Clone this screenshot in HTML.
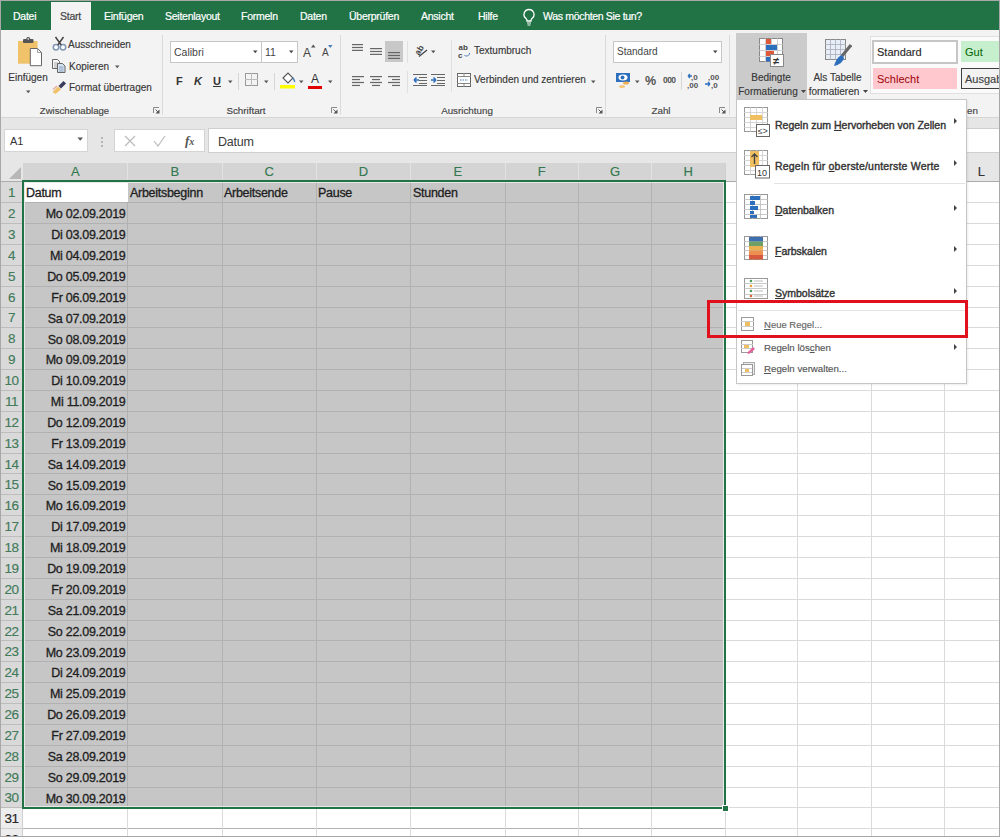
<!DOCTYPE html><html><head><meta charset="utf-8"><style>
html,body{margin:0;padding:0}
body{width:1000px;height:837px;position:relative;overflow:hidden;background:#fff;font-family:"Liberation Sans",sans-serif}
body>div{position:absolute}
.t{white-space:nowrap}
</style></head><body>
<div style="left:0px;top:0px;width:1000px;height:30px;background:#217346"></div>
<div style="left:51px;top:2px;width:40px;height:28px;background:#f3f3f3"></div>
<div class="t" style="left:13px;top:6.0px;line-height:20px;font-size:10.5px;color:#fff;-webkit-text-stroke:0.2px currentColor;letter-spacing:-0.25px;">Datei</div>
<div class="t" style="left:60px;top:6.0px;line-height:20px;font-size:10.5px;color:#444;-webkit-text-stroke:0.2px currentColor;letter-spacing:-0.25px;">Start</div>
<div class="t" style="left:104px;top:6.0px;line-height:20px;font-size:10.5px;color:#fff;-webkit-text-stroke:0.2px currentColor;letter-spacing:-0.25px;">Einfügen</div>
<div class="t" style="left:165px;top:6.0px;line-height:20px;font-size:10.5px;color:#fff;-webkit-text-stroke:0.2px currentColor;letter-spacing:-0.25px;">Seitenlayout</div>
<div class="t" style="left:241px;top:6.0px;line-height:20px;font-size:10.5px;color:#fff;-webkit-text-stroke:0.2px currentColor;letter-spacing:-0.25px;">Formeln</div>
<div class="t" style="left:300px;top:6.0px;line-height:20px;font-size:10.5px;color:#fff;-webkit-text-stroke:0.2px currentColor;letter-spacing:-0.25px;">Daten</div>
<div class="t" style="left:349px;top:6.0px;line-height:20px;font-size:10.5px;color:#fff;-webkit-text-stroke:0.2px currentColor;letter-spacing:-0.25px;">Überprüfen</div>
<div class="t" style="left:421px;top:6.0px;line-height:20px;font-size:10.5px;color:#fff;-webkit-text-stroke:0.2px currentColor;letter-spacing:-0.25px;">Ansicht</div>
<div class="t" style="left:478px;top:6.0px;line-height:20px;font-size:10.5px;color:#fff;-webkit-text-stroke:0.2px currentColor;letter-spacing:-0.25px;">Hilfe</div>
<svg style="position:absolute;left:522px;top:8px" width="14" height="18" viewBox="0 0 14 18"><path d="M7 1.5a5 5 0 0 0-3 9c.8.7 1 1.5 1 2.5h4c0-1 .2-1.8 1-2.5a5 5 0 0 0-3-9z" fill="none" stroke="#fff" stroke-width="1.3"/><path d="M5 15h4M5.5 17h3" stroke="#fff" stroke-width="1.2"/></svg>
<div class="t" style="left:543px;top:6.0px;line-height:20px;font-size:10.6px;color:#fff;-webkit-text-stroke:0.2px currentColor;letter-spacing:-0.37px;">Was möchten Sie tun?</div>
<div style="left:0px;top:30px;width:1000px;height:88px;background:#f3f3f3"></div>
<div style="left:0px;top:117px;width:1000px;height:1px;background:#d6d6d6"></div>
<div style="left:162px;top:35px;width:1px;height:80px;background:#dadada"></div>
<div style="left:340px;top:35px;width:1px;height:80px;background:#dadada"></div>
<div style="left:605px;top:35px;width:1px;height:80px;background:#dadada"></div>
<div style="left:729px;top:35px;width:1px;height:80px;background:#dadada"></div>
<div class="t" style="left:-25.5px;width:200px;text-align:center;top:100.5px;line-height:20px;font-size:9.6px;color:#444;-webkit-text-stroke:0.15px #444;">Zwischenablage</div>
<div class="t" style="left:146.0px;width:200px;text-align:center;top:100.5px;line-height:20px;font-size:9.8px;color:#444;-webkit-text-stroke:0.15px #444;">Schriftart</div>
<div class="t" style="left:367.0px;width:200px;text-align:center;top:100.5px;line-height:20px;font-size:9.8px;color:#444;-webkit-text-stroke:0.15px #444;">Ausrichtung</div>
<div class="t" style="left:561.0px;width:200px;text-align:center;top:100.5px;line-height:20px;font-size:9.8px;color:#444;-webkit-text-stroke:0.15px #444;">Zahl</div>
<div class="t" style="left:967px;top:100.5px;line-height:20px;font-size:9.8px;color:#444;-webkit-text-stroke:0.15px #444;">en</div>
<svg style="position:absolute;left:153px;top:107px" width="7" height="7" viewBox="0 0 7 7"><path d="M0.5 6V0.5H6" stroke="#888" fill="none"/><path d="M6.5 2.5V6.5H2.5z" fill="#555"/><path d="M2.5 2.5l3 3" stroke="#555"/></svg>
<svg style="position:absolute;left:331px;top:107px" width="7" height="7" viewBox="0 0 7 7"><path d="M0.5 6V0.5H6" stroke="#888" fill="none"/><path d="M6.5 2.5V6.5H2.5z" fill="#555"/><path d="M2.5 2.5l3 3" stroke="#555"/></svg>
<svg style="position:absolute;left:596px;top:107px" width="7" height="7" viewBox="0 0 7 7"><path d="M0.5 6V0.5H6" stroke="#888" fill="none"/><path d="M6.5 2.5V6.5H2.5z" fill="#555"/><path d="M2.5 2.5l3 3" stroke="#555"/></svg>
<svg style="position:absolute;left:719px;top:107px" width="7" height="7" viewBox="0 0 7 7"><path d="M0.5 6V0.5H6" stroke="#888" fill="none"/><path d="M6.5 2.5V6.5H2.5z" fill="#555"/><path d="M2.5 2.5l3 3" stroke="#555"/></svg>
<svg style="position:absolute;left:16px;top:36px" width="28" height="32" viewBox="0 0 28 32"><rect x="2" y="5" width="19.5" height="22.7" fill="#f0c26a"/><rect x="7" y="3" width="10.5" height="4" rx="1" fill="#555"/><circle cx="12.2" cy="3" r="2" fill="#555"/><circle cx="12.2" cy="3" r=".8" fill="#fff"/><path d="M14.3 12.5h7.2l4 4v13.2h-11.2z" fill="#fff" stroke="#666" stroke-width="1"/><path d="M21.5 12.5v4h4" fill="none" stroke="#888" stroke-width=".8"/></svg>
<div class="t" style="left:-2.0px;width:60px;text-align:center;top:67.5px;line-height:20px;font-size:10px;color:#333;-webkit-text-stroke:0.15px #444;">Einfügen</div>
<svg style="position:absolute;left:25px;top:90px" width="7" height="4" viewBox="0 0 7 4"><path d="M1 0.5h4.5l-2.25 2.8z" fill="#555"/></svg>
<svg style="position:absolute;left:52px;top:36px" width="15" height="15" viewBox="0 0 15 15"><circle cx="4" cy="11.3" r="2.7" fill="#fff" stroke="#7f96b3" stroke-width="1.5"/><circle cx="11" cy="11.3" r="2.7" fill="#fff" stroke="#7f96b3" stroke-width="1.5"/><path d="M5.8 9L11.5 1M9.2 9L3.5 1" stroke="#444" stroke-width="1.5"/></svg>
<div class="t" style="left:68px;top:34.5px;line-height:20px;font-size:10px;color:#333;-webkit-text-stroke:0.15px #444;">Ausschneiden</div>
<svg style="position:absolute;left:51px;top:58px" width="15" height="15" viewBox="0 0 15 15"><path d="M1.5 1.5h5l2 2v7h-7z" fill="#f6f6f6" stroke="#666"/><path d="M3 5h4M3 7h4M3 9h4" stroke="#999" stroke-width=".8"/><path d="M6.5 5.5h5l2.5 2.5v6.5h-7.5z" fill="#d5e2ef" stroke="#666"/><path d="M8 9h4.5M8 11h4.5M8 13h4.5" stroke="#7f96b3" stroke-width=".8"/></svg>
<div class="t" style="left:69px;top:56.8px;line-height:20px;font-size:10px;color:#333;-webkit-text-stroke:0.15px #444;">Kopieren</div>
<svg style="position:absolute;left:114px;top:65px" width="7" height="4" viewBox="0 0 7 4"><path d="M1 0.5h4.5l-2.25 2.8z" fill="#555"/></svg>
<svg style="position:absolute;left:52px;top:80px" width="15" height="14" viewBox="0 0 15 14"><path d="M0.5 12l5.5-5.5 3 3-5.5 4.5z" fill="#f0c26a"/><path d="M1 9.5l4-3.5" stroke="#e9a8a0" stroke-width="1.2"/><path d="M6.5 6l5-5 2.5 2.5-5 5z" fill="#3b3b5a"/></svg>
<div class="t" style="left:69px;top:78.4px;line-height:20px;font-size:10px;color:#333;-webkit-text-stroke:0.15px #444;">Format übertragen</div>
<div style="left:170px;top:41px;width:92px;height:22px;background:#fff;border:1px solid #c6c6c6;box-sizing:border-box"></div>
<div class="t" style="left:174px;top:41.5px;line-height:20px;font-size:10.5px;color:#444;">Calibri</div>
<svg style="position:absolute;left:252px;top:50px" width="7" height="4" viewBox="0 0 7 4"><path d="M1 0.5h4.5l-2.25 2.8z" fill="#444"/></svg>
<div style="left:261px;top:41px;width:37px;height:22px;background:#fff;border:1px solid #c6c6c6;box-sizing:border-box"></div>
<div class="t" style="left:265px;top:41.5px;line-height:20px;font-size:10.5px;color:#444;">11</div>
<svg style="position:absolute;left:288px;top:50px" width="7" height="4" viewBox="0 0 7 4"><path d="M1 0.5h4.5l-2.25 2.8z" fill="#444"/></svg>
<div class="t" style="left:303px;top:42.5px;line-height:20px;font-size:12px;color:#444;">A</div>
<svg style="position:absolute;left:311px;top:44px" width="5" height="4" viewBox="0 0 5 4"><path d="M0 3.5h4.5l-2.25-3z" fill="#555"/></svg>
<div class="t" style="left:322px;top:43.0px;line-height:20px;font-size:10px;color:#444;">A</div>
<svg style="position:absolute;left:328px;top:45px" width="5" height="4" viewBox="0 0 5 4"><path d="M0 0h4.5l-2.25 3z" fill="#4a7ebb"/></svg>
<div class="t" style="left:176px;top:71.0px;line-height:20px;font-size:11px;color:#333;"><b>F</b></div>
<div class="t" style="left:194px;top:71.0px;line-height:20px;font-size:11px;color:#333;"><b><i>K</i></b></div>
<div class="t" style="left:213px;top:70.5px;line-height:20px;font-size:11px;color:#333;"><b><u>U</u></b></div>
<svg style="position:absolute;left:227px;top:80px" width="7" height="4" viewBox="0 0 7 4"><path d="M1 0.5h4.5l-2.25 2.8z" fill="#555"/></svg>
<div style="left:238px;top:73px;width:1px;height:17px;background:#d6d6d6"></div>
<svg style="position:absolute;left:245px;top:73px" width="13" height="13" viewBox="0 0 13 13"><rect x=".5" y=".5" width="12" height="12" fill="none" stroke="#999"/><path d="M6.5 0v13M0 6.5h13" stroke="#bbb"/></svg>
<svg style="position:absolute;left:263px;top:80px" width="7" height="4" viewBox="0 0 7 4"><path d="M1 0.5h4.5l-2.25 2.8z" fill="#555"/></svg>
<div style="left:274px;top:73px;width:1px;height:17px;background:#d6d6d6"></div>
<svg style="position:absolute;left:280px;top:71px" width="16" height="18" viewBox="0 0 16 18"><path d="M3 7l5-5 5 5-5 5z" fill="#fff" stroke="#555" stroke-width="1.1"/><path d="M13 7c1 2 2 3 1.5 4" stroke="#4a7ebb" stroke-width="1.5" fill="none"/><rect x="0" y="14" width="15" height="3.5" fill="#ffff00"/></svg>
<svg style="position:absolute;left:298px;top:80px" width="7" height="4" viewBox="0 0 7 4"><path d="M1 0.5h4.5l-2.25 2.8z" fill="#555"/></svg>
<div class="t" style="left:311px;top:69.0px;line-height:20px;font-size:12px;color:#333;">A</div>
<div style="left:308px;top:86px;width:14px;height:3px;background:#e00000"></div>
<svg style="position:absolute;left:327px;top:80px" width="7" height="4" viewBox="0 0 7 4"><path d="M1 0.5h4.5l-2.25 2.8z" fill="#555"/></svg>
<svg style="position:absolute;left:352px;top:44px" width="11" height="8.7" viewBox="0 0 11 8.7"><rect x="0" y="0.0" width="11" height="1.2" fill="#666"/><rect x="0" y="2.9" width="11" height="1.2" fill="#666"/><rect x="0" y="5.8" width="11" height="1.2" fill="#666"/></svg>
<svg style="position:absolute;left:370px;top:47.5px" width="12" height="8.7" viewBox="0 0 12 8.7"><rect x="0" y="0.0" width="12" height="1.2" fill="#666"/><rect x="0" y="2.9" width="12" height="1.2" fill="#666"/><rect x="0" y="5.8" width="12" height="1.2" fill="#666"/></svg>
<div style="left:385px;top:41px;width:18px;height:21px;background:#c8c8c8"></div>
<svg style="position:absolute;left:388px;top:52px" width="12" height="8.7" viewBox="0 0 12 8.7"><rect x="0" y="0.0" width="12" height="1.2" fill="#666"/><rect x="0" y="2.9" width="12" height="1.2" fill="#666"/><rect x="0" y="5.8" width="12" height="1.2" fill="#666"/></svg>
<div style="left:407px;top:41px;width:1px;height:22px;background:#e0e0e0"></div>
<div style="left:407px;top:71px;width:1px;height:22px;background:#e0e0e0"></div>
<svg style="position:absolute;left:413px;top:42px" width="16" height="16" viewBox="0 0 16 16"><text x="1" y="11" font-size="8.5" font-weight="bold" font-family="Liberation Sans" fill="#444" transform="rotate(-58 6 8)">ab</text><path d="M6 14.5l8-6.5" stroke="#444" stroke-width="1.3"/></svg>
<svg style="position:absolute;left:430px;top:50px" width="7" height="4" viewBox="0 0 7 4"><path d="M1 0.5h4.5l-2.25 2.8z" fill="#555"/></svg>
<div style="left:451px;top:40px;width:1px;height:52px;background:#e0e0e0"></div>
<svg style="position:absolute;left:458px;top:43px" width="14" height="17" viewBox="0 0 14 17"><text x="0.5" y="7" font-size="8" font-weight="bold" font-family="Liberation Sans" fill="#444">ab</text><text x="0" y="14.5" font-size="8" font-weight="bold" font-family="Liberation Sans" fill="#444">c</text><path d="M6.5 12.5c2 1 5 .5 5-2.5" stroke="#4a7ebb" fill="none" stroke-width="1"/></svg>
<div class="t" style="left:474px;top:41.0px;line-height:20px;font-size:10px;color:#333;-webkit-text-stroke:0.15px #444;">Textumbruch</div>
<svg style="position:absolute;left:352px;top:76px" width="12" height="11.8" viewBox="0 0 12 11.8"><rect x="0" y="0.0" width="12" height="1.2" fill="#666"/><rect x="0" y="2.95" width="8" height="1.2" fill="#666"/><rect x="0" y="5.9" width="12" height="1.2" fill="#666"/><rect x="0" y="8.850000000000001" width="8" height="1.2" fill="#666"/></svg>
<svg style="position:absolute;left:370px;top:76px" width="12" height="12" viewBox="0 0 12 12"><rect x="0.0" y="0.0" width="12" height="1.2" fill="#666"/><rect x="2.0" y="2.95" width="8" height="1.2" fill="#666"/><rect x="0.0" y="5.9" width="12" height="1.2" fill="#666"/><rect x="2.0" y="8.850000000000001" width="8" height="1.2" fill="#666"/></svg>
<svg style="position:absolute;left:388px;top:76px" width="12" height="12" viewBox="0 0 12 12"><rect x="0" y="0.0" width="12" height="1.2" fill="#666"/><rect x="4" y="2.95" width="8" height="1.2" fill="#666"/><rect x="0" y="5.9" width="12" height="1.2" fill="#666"/><rect x="4" y="8.850000000000001" width="8" height="1.2" fill="#666"/></svg>
<svg style="position:absolute;left:413px;top:74px" width="14" height="12" viewBox="0 0 14 12"><path d="M0 .5h14M6 3.5h8M6 6.5h8M6 9.5h8M0 11.5h14" stroke="#666" stroke-width="1"/><path d="M1 6h5M1 6l2.5-2.5M1 6l2.5 2.5" stroke="#2e6fbd" stroke-width="1.5" fill="none"/></svg>
<svg style="position:absolute;left:431px;top:74px" width="14" height="12" viewBox="0 0 14 12"><path d="M0 .5h14M6 3.5h8M6 6.5h8M6 9.5h8M0 11.5h14" stroke="#666" stroke-width="1"/><path d="M0 6h5M5 6l-2.5-2.5M5 6l-2.5 2.5" stroke="#2e6fbd" stroke-width="1.5" fill="none"/></svg>
<svg style="position:absolute;left:457px;top:73px" width="14" height="14" viewBox="0 0 14 14"><rect x=".5" y=".5" width="13" height="13" fill="#fff" stroke="#666"/><path d="M0 3.5h14M0 10.5h14M7 0v3.5M7 10.5v3.5" stroke="#888"/><path d="M3 7h8" stroke="#4a7ebb" stroke-width="1" stroke-dasharray="1.5 1"/></svg>
<div class="t" style="left:474px;top:70.0px;line-height:20px;font-size:10px;color:#333;-webkit-text-stroke:0.15px #444;">Verbinden und zentrieren</div>
<svg style="position:absolute;left:590px;top:80px" width="7" height="4" viewBox="0 0 7 4"><path d="M1 0.5h4.5l-2.25 2.8z" fill="#555"/></svg>
<div style="left:613px;top:41px;width:109px;height:22px;background:#fff;border:1px solid #c6c6c6;box-sizing:border-box"></div>
<div class="t" style="left:617px;top:41.5px;line-height:20px;font-size:10px;color:#444;">Standard</div>
<svg style="position:absolute;left:712px;top:50px" width="7" height="4" viewBox="0 0 7 4"><path d="M1 0.5h4.5l-2.25 2.8z" fill="#444"/></svg>
<svg style="position:absolute;left:615px;top:72px" width="16" height="17" viewBox="0 0 16 17"><rect x="1" y="1" width="14" height="9" fill="#2e6fbd"/><ellipse cx="8" cy="5.5" rx="4.5" ry="3" fill="#fff"/><circle cx="7.5" cy="5.5" r="2" fill="#2e6fbd"/><ellipse cx="11" cy="11" rx="3" ry="1.6" fill="#f0b050"/><ellipse cx="7" cy="14.5" rx="3" ry="1.6" fill="#f5c880"/></svg>
<svg style="position:absolute;left:634px;top:80px" width="7" height="4" viewBox="0 0 7 4"><path d="M1 0.5h4.5l-2.25 2.8z" fill="#555"/></svg>
<div class="t" style="left:645px;top:71.0px;line-height:20px;font-size:12.5px;color:#555;"><b>%</b></div>
<div class="t" style="left:663px;top:69.5px;line-height:20px;font-size:8.5px;color:#555;letter-spacing:-0.6px"><b>000</b></div>
<div style="left:681px;top:72px;width:1px;height:18px;background:#d6d6d6"></div>
<svg style="position:absolute;left:687px;top:72px" width="15" height="18" viewBox="0 0 15 18"><text x="4" y="7.5" font-size="8" font-weight="bold" font-family="Liberation Sans" fill="#555">,0</text><text x="0" y="15.5" font-size="8" font-weight="bold" font-family="Liberation Sans" fill="#555">,00</text><path d="M1 4h4M1 4l2-2M1 4l2 2" stroke="#2e6fbd" stroke-width="1.3" fill="none"/></svg>
<svg style="position:absolute;left:705px;top:72px" width="15" height="18" viewBox="0 0 15 18"><text x="3" y="7.5" font-size="8" font-weight="bold" font-family="Liberation Sans" fill="#555">,00</text><text x="6" y="15.5" font-size="8" font-weight="bold" font-family="Liberation Sans" fill="#555">,0</text><path d="M0 12h5M5 12l-2-2M5 12l-2 2" stroke="#2e6fbd" stroke-width="1.3" fill="none"/></svg>
<div style="left:736px;top:33px;width:71px;height:66px;background:#cbcbcb"></div>
<svg style="position:absolute;left:759px;top:38px" width="26" height="29" viewBox="0 0 26 29"><rect x=".5" y=".5" width="23" height="23" fill="#fff" stroke="#888"/><path d="M6.5 0v24M12.5 0v24M18.5 0v24M0 6.5h24M0 12.5h24M0 18.5h24" stroke="#c4c4c4" stroke-width=".8"/><rect x="7" y="1" width="5" height="5" fill="#e05a3a"/><rect x="7" y="7" width="11" height="5" fill="#2e6fbd"/><rect x="7" y="13" width="8" height="5" fill="#e05a3a"/><rect x="7" y="19" width="5" height="4.5" fill="#2e6fbd"/><rect x="11.5" y="16.5" width="13" height="12" fill="#fff" stroke="#888"/><text x="14" y="26.5" font-size="11" font-weight="bold" font-family="Liberation Sans" fill="#333">≠</text></svg>
<div class="t" style="left:736.0px;width:70px;text-align:center;top:67.6px;line-height:20px;font-size:10px;color:#333;-webkit-text-stroke:0.15px #444;">Bedingte</div>
<div class="t" style="left:728.0px;width:80px;text-align:center;top:82.2px;line-height:20px;font-size:10px;color:#333;-webkit-text-stroke:0.15px #444;">Formatierung</div>
<svg style="position:absolute;left:801px;top:90px" width="5" height="3" viewBox="0 0 5 3"><path d="M0 0h5l-2.5 3z" fill="#444"/></svg>
<svg style="position:absolute;left:825px;top:39px" width="27" height="28" viewBox="0 0 27 28"><rect x=".5" y=".5" width="20" height="20" fill="#e8eef6" stroke="#888"/><path d="M5.5 0v21M10.5 0v21M15.5 0v21M0 5.5h21M0 10.5h21M0 15.5h21" stroke="#aab" stroke-width=".8"/><path d="M26 6l-9 11" stroke="#666" stroke-width="3"/><path d="M17 16c-3 1-6 4-8 11 5-1 9-4 10-8z" fill="#2e6fbd"/></svg>
<div class="t" style="left:802.5px;width:70px;text-align:center;top:67.6px;line-height:20px;font-size:10px;color:#333;-webkit-text-stroke:0.15px #444;">Als Tabelle</div>
<div class="t" style="left:799.0px;width:70px;text-align:center;top:82.2px;line-height:20px;font-size:10px;color:#333;-webkit-text-stroke:0.15px #444;">formatieren</div>
<svg style="position:absolute;left:863px;top:90px" width="5" height="3" viewBox="0 0 5 3"><path d="M0 0h5l-2.5 3z" fill="#444"/></svg>
<div style="left:870px;top:36px;width:130px;height:58px;background:#fafafa;border:1px solid #e0e0e0;box-sizing:border-box"></div>
<div style="left:872px;top:40px;width:86px;height:24px;background:#fff;border:2px solid #c6c6c6;box-sizing:border-box"></div>
<div class="t" style="left:877px;top:41.5px;line-height:20px;font-size:11px;color:#222;-webkit-text-stroke:0.15px #444;">Standard</div>
<div style="left:961px;top:41px;width:39px;height:21px;background:#c6efce"></div>
<div class="t" style="left:965px;top:41.5px;line-height:20px;font-size:11px;color:#006100;">Gut</div>
<div style="left:873px;top:68px;width:84px;height:21px;background:#ffc7ce"></div>
<div class="t" style="left:877px;top:68.5px;line-height:20px;font-size:11px;color:#9c0006;">Schlecht</div>
<div style="left:961px;top:68px;width:39px;height:21px;background:#f2f2f2;border:1px solid #3f3f3f;box-sizing:border-box;border-right:none"></div>
<div class="t" style="left:965px;top:68.5px;line-height:20px;font-size:11px;color:#3f3f3f;-webkit-text-stroke:0.15px #444;">Ausgabe</div>
<div style="left:0px;top:118px;width:1000px;height:45px;background:#e6e6e6"></div>
<div style="left:4px;top:129px;width:84px;height:23px;background:#fff;border:1px solid #d4d4d4;box-sizing:border-box"></div>
<div class="t" style="left:10px;top:131.0px;line-height:20px;font-size:11px;color:#333;">A1</div>
<svg style="position:absolute;left:77px;top:137px" width="7" height="5" viewBox="0 0 7 5"><path d="M.5 .5h5.5l-2.75 3.2z" fill="#555"/></svg>
<div style="left:101px;top:137px;width:2px;height:2px;background:#b5b5b5"></div>
<div style="left:101px;top:141px;width:2px;height:2px;background:#b5b5b5"></div>
<div style="left:101px;top:145px;width:2px;height:2px;background:#b5b5b5"></div>
<div style="left:114px;top:129px;width:91px;height:23px;background:#fff;border:1px solid #d4d4d4;box-sizing:border-box"></div>
<svg style="position:absolute;left:124px;top:135px" width="12" height="12" viewBox="0 0 12 12"><path d="M1 1l10 10M11 1L1 11" stroke="#bbb" stroke-width="1.2"/></svg>
<svg style="position:absolute;left:153px;top:135px" width="13" height="12" viewBox="0 0 13 12"><path d="M1 6l4 5 7-10" stroke="#bbb" stroke-width="1.2" fill="none"/></svg>
<div class="t" style="left:185px;top:131.0px;line-height:20px;font-size:13px;color:#555;font-family:'Liberation Serif',serif"><b><i>f</i><i style="font-size:10px">x</i></b></div>
<div style="left:208px;top:128px;width:792px;height:25px;background:#fff;border:1px solid #cfcfcf;box-sizing:border-box"></div>
<div class="t" style="left:218px;top:131.5px;line-height:20px;font-size:12.5px;color:#3a3a3a;letter-spacing:-0.2px;">Datum</div>
<div style="left:0px;top:163px;width:1000px;height:18px;background:#e6e6e6"></div>
<div style="left:23px;top:163px;width:702px;height:18px;background:#d4d4d4"></div>
<div style="left:0px;top:181px;width:1000px;height:1px;background:#ababab"></div>
<div style="left:127.0px;top:163px;width:1px;height:18px;background:#e2e2e2"></div>
<div class="t" style="left:-24.75px;width:200px;text-align:center;top:162.0px;line-height:20px;font-size:13px;color:#35784f;-webkit-text-stroke:0.15px currentColor;">A</div>
<div style="left:221.5px;top:163px;width:1px;height:18px;background:#e2e2e2"></div>
<div class="t" style="left:74.75px;width:200px;text-align:center;top:162.0px;line-height:20px;font-size:13px;color:#35784f;-webkit-text-stroke:0.15px currentColor;">B</div>
<div style="left:316.0px;top:163px;width:1px;height:18px;background:#e2e2e2"></div>
<div class="t" style="left:169.25px;width:200px;text-align:center;top:162.0px;line-height:20px;font-size:13px;color:#35784f;-webkit-text-stroke:0.15px currentColor;">C</div>
<div style="left:410.0px;top:163px;width:1px;height:18px;background:#e2e2e2"></div>
<div class="t" style="left:263.5px;width:200px;text-align:center;top:162.0px;line-height:20px;font-size:13px;color:#35784f;-webkit-text-stroke:0.15px currentColor;">D</div>
<div style="left:504.5px;top:163px;width:1px;height:18px;background:#e2e2e2"></div>
<div class="t" style="left:357.75px;width:200px;text-align:center;top:162.0px;line-height:20px;font-size:13px;color:#35784f;-webkit-text-stroke:0.15px currentColor;">E</div>
<div style="left:578.0px;top:163px;width:1px;height:18px;background:#e2e2e2"></div>
<div class="t" style="left:441.75px;width:200px;text-align:center;top:162.0px;line-height:20px;font-size:13px;color:#35784f;-webkit-text-stroke:0.15px currentColor;">F</div>
<div style="left:651.0px;top:163px;width:1px;height:18px;background:#e2e2e2"></div>
<div class="t" style="left:515.0px;width:200px;text-align:center;top:162.0px;line-height:20px;font-size:13px;color:#35784f;-webkit-text-stroke:0.15px currentColor;">G</div>
<div style="left:724.5px;top:163px;width:1px;height:18px;background:#cfcfcf"></div>
<div class="t" style="left:588.25px;width:200px;text-align:center;top:162.0px;line-height:20px;font-size:13px;color:#35784f;-webkit-text-stroke:0.15px currentColor;">H</div>
<div style="left:797.0px;top:163px;width:1px;height:18px;background:#cfcfcf"></div>
<div style="left:870.5px;top:163px;width:1px;height:18px;background:#cfcfcf"></div>
<div style="left:944.0px;top:163px;width:1px;height:18px;background:#cfcfcf"></div>
<div style="left:1017.5px;top:163px;width:1px;height:18px;background:#cfcfcf"></div>
<div class="t" style="left:881.25px;width:200px;text-align:center;top:162.0px;line-height:20px;font-size:13px;color:#333;-webkit-text-stroke:0.15px currentColor;">L</div>
<svg style="position:absolute;left:8px;top:166px" width="14" height="14" viewBox="0 0 14 14"><path d="M13 1v12H1z" fill="#b7b7b7"/></svg>
<div style="left:0px;top:182px;width:23px;height:700px;background:#ededed"></div>
<div style="left:0px;top:182px;width:23px;height:625.6px;background:#d9d9d9"></div>
<div style="left:22px;top:808px;width:1px;height:40px;background:#cfcfcf"></div>
<div style="left:23px;top:182px;width:977px;height:700px;background:#fff"></div>
<div style="left:23px;top:181.5px;width:702px;height:626.1px;background:#c6c6c6"></div>
<div style="left:23px;top:202.17000000000002px;width:702px;height:1px;background:#b1b1b1"></div>
<div style="left:725px;top:202.17000000000002px;width:275px;height:1px;background:#dadada"></div>
<div style="left:0px;top:202.17000000000002px;width:23px;height:1px;background:#bdbdbd"></div>
<div style="left:23px;top:223.04000000000002px;width:702px;height:1px;background:#b1b1b1"></div>
<div style="left:725px;top:223.04000000000002px;width:275px;height:1px;background:#dadada"></div>
<div style="left:0px;top:223.04000000000002px;width:23px;height:1px;background:#bdbdbd"></div>
<div style="left:23px;top:243.91000000000003px;width:702px;height:1px;background:#b1b1b1"></div>
<div style="left:725px;top:243.91000000000003px;width:275px;height:1px;background:#dadada"></div>
<div style="left:0px;top:243.91000000000003px;width:23px;height:1px;background:#bdbdbd"></div>
<div style="left:23px;top:264.78000000000003px;width:702px;height:1px;background:#b1b1b1"></div>
<div style="left:725px;top:264.78000000000003px;width:275px;height:1px;background:#dadada"></div>
<div style="left:0px;top:264.78000000000003px;width:23px;height:1px;background:#bdbdbd"></div>
<div style="left:23px;top:285.65000000000003px;width:702px;height:1px;background:#b1b1b1"></div>
<div style="left:725px;top:285.65000000000003px;width:275px;height:1px;background:#dadada"></div>
<div style="left:0px;top:285.65000000000003px;width:23px;height:1px;background:#bdbdbd"></div>
<div style="left:23px;top:306.52000000000004px;width:702px;height:1px;background:#b1b1b1"></div>
<div style="left:725px;top:306.52000000000004px;width:275px;height:1px;background:#dadada"></div>
<div style="left:0px;top:306.52000000000004px;width:23px;height:1px;background:#bdbdbd"></div>
<div style="left:23px;top:327.39000000000004px;width:702px;height:1px;background:#b1b1b1"></div>
<div style="left:725px;top:327.39000000000004px;width:275px;height:1px;background:#dadada"></div>
<div style="left:0px;top:327.39000000000004px;width:23px;height:1px;background:#bdbdbd"></div>
<div style="left:23px;top:348.26000000000005px;width:702px;height:1px;background:#b1b1b1"></div>
<div style="left:725px;top:348.26000000000005px;width:275px;height:1px;background:#dadada"></div>
<div style="left:0px;top:348.26000000000005px;width:23px;height:1px;background:#bdbdbd"></div>
<div style="left:23px;top:369.13000000000005px;width:702px;height:1px;background:#b1b1b1"></div>
<div style="left:725px;top:369.13000000000005px;width:275px;height:1px;background:#dadada"></div>
<div style="left:0px;top:369.13000000000005px;width:23px;height:1px;background:#bdbdbd"></div>
<div style="left:23px;top:390.00000000000006px;width:702px;height:1px;background:#b1b1b1"></div>
<div style="left:725px;top:390.00000000000006px;width:275px;height:1px;background:#dadada"></div>
<div style="left:0px;top:390.00000000000006px;width:23px;height:1px;background:#bdbdbd"></div>
<div style="left:23px;top:410.87000000000006px;width:702px;height:1px;background:#b1b1b1"></div>
<div style="left:725px;top:410.87000000000006px;width:275px;height:1px;background:#dadada"></div>
<div style="left:0px;top:410.87000000000006px;width:23px;height:1px;background:#bdbdbd"></div>
<div style="left:23px;top:431.74px;width:702px;height:1px;background:#b1b1b1"></div>
<div style="left:725px;top:431.74px;width:275px;height:1px;background:#dadada"></div>
<div style="left:0px;top:431.74px;width:23px;height:1px;background:#bdbdbd"></div>
<div style="left:23px;top:452.61px;width:702px;height:1px;background:#b1b1b1"></div>
<div style="left:725px;top:452.61px;width:275px;height:1px;background:#dadada"></div>
<div style="left:0px;top:452.61px;width:23px;height:1px;background:#bdbdbd"></div>
<div style="left:23px;top:473.48px;width:702px;height:1px;background:#b1b1b1"></div>
<div style="left:725px;top:473.48px;width:275px;height:1px;background:#dadada"></div>
<div style="left:0px;top:473.48px;width:23px;height:1px;background:#bdbdbd"></div>
<div style="left:23px;top:494.35px;width:702px;height:1px;background:#b1b1b1"></div>
<div style="left:725px;top:494.35px;width:275px;height:1px;background:#dadada"></div>
<div style="left:0px;top:494.35px;width:23px;height:1px;background:#bdbdbd"></div>
<div style="left:23px;top:515.22px;width:702px;height:1px;background:#b1b1b1"></div>
<div style="left:725px;top:515.22px;width:275px;height:1px;background:#dadada"></div>
<div style="left:0px;top:515.22px;width:23px;height:1px;background:#bdbdbd"></div>
<div style="left:23px;top:536.0899999999999px;width:702px;height:1px;background:#b1b1b1"></div>
<div style="left:725px;top:536.0899999999999px;width:275px;height:1px;background:#dadada"></div>
<div style="left:0px;top:536.0899999999999px;width:23px;height:1px;background:#bdbdbd"></div>
<div style="left:23px;top:556.96px;width:702px;height:1px;background:#b1b1b1"></div>
<div style="left:725px;top:556.96px;width:275px;height:1px;background:#dadada"></div>
<div style="left:0px;top:556.96px;width:23px;height:1px;background:#bdbdbd"></div>
<div style="left:23px;top:577.8299999999999px;width:702px;height:1px;background:#b1b1b1"></div>
<div style="left:725px;top:577.8299999999999px;width:275px;height:1px;background:#dadada"></div>
<div style="left:0px;top:577.8299999999999px;width:23px;height:1px;background:#bdbdbd"></div>
<div style="left:23px;top:598.7px;width:702px;height:1px;background:#b1b1b1"></div>
<div style="left:725px;top:598.7px;width:275px;height:1px;background:#dadada"></div>
<div style="left:0px;top:598.7px;width:23px;height:1px;background:#bdbdbd"></div>
<div style="left:23px;top:619.5699999999999px;width:702px;height:1px;background:#b1b1b1"></div>
<div style="left:725px;top:619.5699999999999px;width:275px;height:1px;background:#dadada"></div>
<div style="left:0px;top:619.5699999999999px;width:23px;height:1px;background:#bdbdbd"></div>
<div style="left:23px;top:640.44px;width:702px;height:1px;background:#b1b1b1"></div>
<div style="left:725px;top:640.44px;width:275px;height:1px;background:#dadada"></div>
<div style="left:0px;top:640.44px;width:23px;height:1px;background:#bdbdbd"></div>
<div style="left:23px;top:661.31px;width:702px;height:1px;background:#b1b1b1"></div>
<div style="left:725px;top:661.31px;width:275px;height:1px;background:#dadada"></div>
<div style="left:0px;top:661.31px;width:23px;height:1px;background:#bdbdbd"></div>
<div style="left:23px;top:682.18px;width:702px;height:1px;background:#b1b1b1"></div>
<div style="left:725px;top:682.18px;width:275px;height:1px;background:#dadada"></div>
<div style="left:0px;top:682.18px;width:23px;height:1px;background:#bdbdbd"></div>
<div style="left:23px;top:703.05px;width:702px;height:1px;background:#b1b1b1"></div>
<div style="left:725px;top:703.05px;width:275px;height:1px;background:#dadada"></div>
<div style="left:0px;top:703.05px;width:23px;height:1px;background:#bdbdbd"></div>
<div style="left:23px;top:723.92px;width:702px;height:1px;background:#b1b1b1"></div>
<div style="left:725px;top:723.92px;width:275px;height:1px;background:#dadada"></div>
<div style="left:0px;top:723.92px;width:23px;height:1px;background:#bdbdbd"></div>
<div style="left:23px;top:744.79px;width:702px;height:1px;background:#b1b1b1"></div>
<div style="left:725px;top:744.79px;width:275px;height:1px;background:#dadada"></div>
<div style="left:0px;top:744.79px;width:23px;height:1px;background:#bdbdbd"></div>
<div style="left:23px;top:765.66px;width:702px;height:1px;background:#b1b1b1"></div>
<div style="left:725px;top:765.66px;width:275px;height:1px;background:#dadada"></div>
<div style="left:0px;top:765.66px;width:23px;height:1px;background:#bdbdbd"></div>
<div style="left:23px;top:786.53px;width:702px;height:1px;background:#b1b1b1"></div>
<div style="left:725px;top:786.53px;width:275px;height:1px;background:#dadada"></div>
<div style="left:0px;top:786.53px;width:23px;height:1px;background:#bdbdbd"></div>
<div style="left:23px;top:807.4px;width:702px;height:1px;background:#b1b1b1"></div>
<div style="left:725px;top:807.4px;width:275px;height:1px;background:#dadada"></div>
<div style="left:0px;top:807.4px;width:23px;height:1px;background:#bdbdbd"></div>
<div style="left:23px;top:828.27px;width:702px;height:1px;background:#b1b1b1"></div>
<div style="left:725px;top:828.27px;width:275px;height:1px;background:#dadada"></div>
<div style="left:0px;top:828.27px;width:23px;height:1px;background:#cfcfcf"></div>
<div style="left:23px;top:849.14px;width:702px;height:1px;background:#b1b1b1"></div>
<div style="left:725px;top:849.14px;width:275px;height:1px;background:#dadada"></div>
<div style="left:0px;top:849.14px;width:23px;height:1px;background:#cfcfcf"></div>
<div style="left:127.0px;top:182px;width:1px;height:625.6px;background:#b1b1b1"></div>
<div style="left:127.0px;top:807.6px;width:1px;height:100px;background:#dadada"></div>
<div style="left:221.5px;top:182px;width:1px;height:625.6px;background:#b1b1b1"></div>
<div style="left:221.5px;top:807.6px;width:1px;height:100px;background:#dadada"></div>
<div style="left:316.0px;top:182px;width:1px;height:625.6px;background:#b1b1b1"></div>
<div style="left:316.0px;top:807.6px;width:1px;height:100px;background:#dadada"></div>
<div style="left:410.0px;top:182px;width:1px;height:625.6px;background:#b1b1b1"></div>
<div style="left:410.0px;top:807.6px;width:1px;height:100px;background:#dadada"></div>
<div style="left:504.5px;top:182px;width:1px;height:625.6px;background:#b1b1b1"></div>
<div style="left:504.5px;top:807.6px;width:1px;height:100px;background:#dadada"></div>
<div style="left:578.0px;top:182px;width:1px;height:625.6px;background:#b1b1b1"></div>
<div style="left:578.0px;top:807.6px;width:1px;height:100px;background:#dadada"></div>
<div style="left:651.0px;top:182px;width:1px;height:625.6px;background:#b1b1b1"></div>
<div style="left:651.0px;top:807.6px;width:1px;height:100px;background:#dadada"></div>
<div style="left:724.5px;top:182px;width:1px;height:700px;background:#dadada"></div>
<div style="left:797.0px;top:182px;width:1px;height:700px;background:#dadada"></div>
<div style="left:870.5px;top:182px;width:1px;height:700px;background:#dadada"></div>
<div style="left:944.0px;top:182px;width:1px;height:700px;background:#dadada"></div>
<div style="left:23px;top:182px;width:104.5px;height:20.3px;background:#fff"></div>
<div class="t" style="left:0.0px;width:23px;text-align:center;top:183.235px;line-height:20px;font-size:13.5px;color:#427a5a;-webkit-text-stroke:0.15px currentColor;letter-spacing:-0.6px;">1</div>
<div class="t" style="left:0.0px;width:23px;text-align:center;top:204.10500000000002px;line-height:20px;font-size:13.5px;color:#427a5a;-webkit-text-stroke:0.15px currentColor;letter-spacing:-0.6px;">2</div>
<div class="t" style="left:0.0px;width:23px;text-align:center;top:224.97500000000002px;line-height:20px;font-size:13.5px;color:#427a5a;-webkit-text-stroke:0.15px currentColor;letter-spacing:-0.6px;">3</div>
<div class="t" style="left:0.0px;width:23px;text-align:center;top:245.84500000000003px;line-height:20px;font-size:13.5px;color:#427a5a;-webkit-text-stroke:0.15px currentColor;letter-spacing:-0.6px;">4</div>
<div class="t" style="left:0.0px;width:23px;text-align:center;top:266.71500000000003px;line-height:20px;font-size:13.5px;color:#427a5a;-webkit-text-stroke:0.15px currentColor;letter-spacing:-0.6px;">5</div>
<div class="t" style="left:0.0px;width:23px;text-align:center;top:287.58500000000004px;line-height:20px;font-size:13.5px;color:#427a5a;-webkit-text-stroke:0.15px currentColor;letter-spacing:-0.6px;">6</div>
<div class="t" style="left:0.0px;width:23px;text-align:center;top:308.455px;line-height:20px;font-size:13.5px;color:#427a5a;-webkit-text-stroke:0.15px currentColor;letter-spacing:-0.6px;">7</div>
<div class="t" style="left:0.0px;width:23px;text-align:center;top:329.325px;line-height:20px;font-size:13.5px;color:#427a5a;-webkit-text-stroke:0.15px currentColor;letter-spacing:-0.6px;">8</div>
<div class="t" style="left:0.0px;width:23px;text-align:center;top:350.195px;line-height:20px;font-size:13.5px;color:#427a5a;-webkit-text-stroke:0.15px currentColor;letter-spacing:-0.6px;">9</div>
<div class="t" style="left:0.0px;width:23px;text-align:center;top:371.065px;line-height:20px;font-size:13.5px;color:#427a5a;-webkit-text-stroke:0.15px currentColor;letter-spacing:-0.6px;">10</div>
<div class="t" style="left:0.0px;width:23px;text-align:center;top:391.935px;line-height:20px;font-size:13.5px;color:#427a5a;-webkit-text-stroke:0.15px currentColor;letter-spacing:-0.6px;">11</div>
<div class="t" style="left:0.0px;width:23px;text-align:center;top:412.805px;line-height:20px;font-size:13.5px;color:#427a5a;-webkit-text-stroke:0.15px currentColor;letter-spacing:-0.6px;">12</div>
<div class="t" style="left:0.0px;width:23px;text-align:center;top:433.675px;line-height:20px;font-size:13.5px;color:#427a5a;-webkit-text-stroke:0.15px currentColor;letter-spacing:-0.6px;">13</div>
<div class="t" style="left:0.0px;width:23px;text-align:center;top:454.545px;line-height:20px;font-size:13.5px;color:#427a5a;-webkit-text-stroke:0.15px currentColor;letter-spacing:-0.6px;">14</div>
<div class="t" style="left:0.0px;width:23px;text-align:center;top:475.415px;line-height:20px;font-size:13.5px;color:#427a5a;-webkit-text-stroke:0.15px currentColor;letter-spacing:-0.6px;">15</div>
<div class="t" style="left:0.0px;width:23px;text-align:center;top:496.285px;line-height:20px;font-size:13.5px;color:#427a5a;-webkit-text-stroke:0.15px currentColor;letter-spacing:-0.6px;">16</div>
<div class="t" style="left:0.0px;width:23px;text-align:center;top:517.155px;line-height:20px;font-size:13.5px;color:#427a5a;-webkit-text-stroke:0.15px currentColor;letter-spacing:-0.6px;">17</div>
<div class="t" style="left:0.0px;width:23px;text-align:center;top:538.025px;line-height:20px;font-size:13.5px;color:#427a5a;-webkit-text-stroke:0.15px currentColor;letter-spacing:-0.6px;">18</div>
<div class="t" style="left:0.0px;width:23px;text-align:center;top:558.895px;line-height:20px;font-size:13.5px;color:#427a5a;-webkit-text-stroke:0.15px currentColor;letter-spacing:-0.6px;">19</div>
<div class="t" style="left:0.0px;width:23px;text-align:center;top:579.765px;line-height:20px;font-size:13.5px;color:#427a5a;-webkit-text-stroke:0.15px currentColor;letter-spacing:-0.6px;">20</div>
<div class="t" style="left:0.0px;width:23px;text-align:center;top:600.635px;line-height:20px;font-size:13.5px;color:#427a5a;-webkit-text-stroke:0.15px currentColor;letter-spacing:-0.6px;">21</div>
<div class="t" style="left:0.0px;width:23px;text-align:center;top:621.505px;line-height:20px;font-size:13.5px;color:#427a5a;-webkit-text-stroke:0.15px currentColor;letter-spacing:-0.6px;">22</div>
<div class="t" style="left:0.0px;width:23px;text-align:center;top:642.375px;line-height:20px;font-size:13.5px;color:#427a5a;-webkit-text-stroke:0.15px currentColor;letter-spacing:-0.6px;">23</div>
<div class="t" style="left:0.0px;width:23px;text-align:center;top:663.245px;line-height:20px;font-size:13.5px;color:#427a5a;-webkit-text-stroke:0.15px currentColor;letter-spacing:-0.6px;">24</div>
<div class="t" style="left:0.0px;width:23px;text-align:center;top:684.115px;line-height:20px;font-size:13.5px;color:#427a5a;-webkit-text-stroke:0.15px currentColor;letter-spacing:-0.6px;">25</div>
<div class="t" style="left:0.0px;width:23px;text-align:center;top:704.985px;line-height:20px;font-size:13.5px;color:#427a5a;-webkit-text-stroke:0.15px currentColor;letter-spacing:-0.6px;">26</div>
<div class="t" style="left:0.0px;width:23px;text-align:center;top:725.855px;line-height:20px;font-size:13.5px;color:#427a5a;-webkit-text-stroke:0.15px currentColor;letter-spacing:-0.6px;">27</div>
<div class="t" style="left:0.0px;width:23px;text-align:center;top:746.725px;line-height:20px;font-size:13.5px;color:#427a5a;-webkit-text-stroke:0.15px currentColor;letter-spacing:-0.6px;">28</div>
<div class="t" style="left:0.0px;width:23px;text-align:center;top:767.595px;line-height:20px;font-size:13.5px;color:#427a5a;-webkit-text-stroke:0.15px currentColor;letter-spacing:-0.6px;">29</div>
<div class="t" style="left:0.0px;width:23px;text-align:center;top:788.465px;line-height:20px;font-size:13.5px;color:#427a5a;-webkit-text-stroke:0.15px currentColor;letter-spacing:-0.6px;">30</div>
<div class="t" style="left:0.0px;width:23px;text-align:center;top:809.335px;line-height:20px;font-size:13.5px;color:#262626;-webkit-text-stroke:0.15px currentColor;letter-spacing:-0.6px;">31</div>
<div class="t" style="left:0.0px;width:23px;text-align:center;top:830.205px;line-height:20px;font-size:13.5px;color:#262626;-webkit-text-stroke:0.15px currentColor;letter-spacing:-0.6px;">32</div>
<div class="t" style="left:-74.5px;width:200px;text-align:right;top:204.305px;line-height:20px;font-size:12.5px;color:#1e1e1e;letter-spacing:-0.28px;-webkit-text-stroke:0.3px #1e1e1e;">Mo 02.09.2019</div>
<div class="t" style="left:-74.5px;width:200px;text-align:right;top:225.175px;line-height:20px;font-size:12.5px;color:#1e1e1e;letter-spacing:-0.28px;-webkit-text-stroke:0.3px #1e1e1e;">Di 03.09.2019</div>
<div class="t" style="left:-74.5px;width:200px;text-align:right;top:246.04500000000002px;line-height:20px;font-size:12.5px;color:#1e1e1e;letter-spacing:-0.28px;-webkit-text-stroke:0.3px #1e1e1e;">Mi 04.09.2019</div>
<div class="t" style="left:-74.5px;width:200px;text-align:right;top:266.915px;line-height:20px;font-size:12.5px;color:#1e1e1e;letter-spacing:-0.28px;-webkit-text-stroke:0.3px #1e1e1e;">Do 05.09.2019</div>
<div class="t" style="left:-74.5px;width:200px;text-align:right;top:287.785px;line-height:20px;font-size:12.5px;color:#1e1e1e;letter-spacing:-0.28px;-webkit-text-stroke:0.3px #1e1e1e;">Fr 06.09.2019</div>
<div class="t" style="left:-74.5px;width:200px;text-align:right;top:308.655px;line-height:20px;font-size:12.5px;color:#1e1e1e;letter-spacing:-0.28px;-webkit-text-stroke:0.3px #1e1e1e;">Sa 07.09.2019</div>
<div class="t" style="left:-74.5px;width:200px;text-align:right;top:329.525px;line-height:20px;font-size:12.5px;color:#1e1e1e;letter-spacing:-0.28px;-webkit-text-stroke:0.3px #1e1e1e;">So 08.09.2019</div>
<div class="t" style="left:-74.5px;width:200px;text-align:right;top:350.395px;line-height:20px;font-size:12.5px;color:#1e1e1e;letter-spacing:-0.28px;-webkit-text-stroke:0.3px #1e1e1e;">Mo 09.09.2019</div>
<div class="t" style="left:-74.5px;width:200px;text-align:right;top:371.265px;line-height:20px;font-size:12.5px;color:#1e1e1e;letter-spacing:-0.28px;-webkit-text-stroke:0.3px #1e1e1e;">Di 10.09.2019</div>
<div class="t" style="left:-74.5px;width:200px;text-align:right;top:392.135px;line-height:20px;font-size:12.5px;color:#1e1e1e;letter-spacing:-0.28px;-webkit-text-stroke:0.3px #1e1e1e;">Mi 11.09.2019</div>
<div class="t" style="left:-74.5px;width:200px;text-align:right;top:413.005px;line-height:20px;font-size:12.5px;color:#1e1e1e;letter-spacing:-0.28px;-webkit-text-stroke:0.3px #1e1e1e;">Do 12.09.2019</div>
<div class="t" style="left:-74.5px;width:200px;text-align:right;top:433.875px;line-height:20px;font-size:12.5px;color:#1e1e1e;letter-spacing:-0.28px;-webkit-text-stroke:0.3px #1e1e1e;">Fr 13.09.2019</div>
<div class="t" style="left:-74.5px;width:200px;text-align:right;top:454.745px;line-height:20px;font-size:12.5px;color:#1e1e1e;letter-spacing:-0.28px;-webkit-text-stroke:0.3px #1e1e1e;">Sa 14.09.2019</div>
<div class="t" style="left:-74.5px;width:200px;text-align:right;top:475.615px;line-height:20px;font-size:12.5px;color:#1e1e1e;letter-spacing:-0.28px;-webkit-text-stroke:0.3px #1e1e1e;">So 15.09.2019</div>
<div class="t" style="left:-74.5px;width:200px;text-align:right;top:496.485px;line-height:20px;font-size:12.5px;color:#1e1e1e;letter-spacing:-0.28px;-webkit-text-stroke:0.3px #1e1e1e;">Mo 16.09.2019</div>
<div class="t" style="left:-74.5px;width:200px;text-align:right;top:517.355px;line-height:20px;font-size:12.5px;color:#1e1e1e;letter-spacing:-0.28px;-webkit-text-stroke:0.3px #1e1e1e;">Di 17.09.2019</div>
<div class="t" style="left:-74.5px;width:200px;text-align:right;top:538.225px;line-height:20px;font-size:12.5px;color:#1e1e1e;letter-spacing:-0.28px;-webkit-text-stroke:0.3px #1e1e1e;">Mi 18.09.2019</div>
<div class="t" style="left:-74.5px;width:200px;text-align:right;top:559.095px;line-height:20px;font-size:12.5px;color:#1e1e1e;letter-spacing:-0.28px;-webkit-text-stroke:0.3px #1e1e1e;">Do 19.09.2019</div>
<div class="t" style="left:-74.5px;width:200px;text-align:right;top:579.965px;line-height:20px;font-size:12.5px;color:#1e1e1e;letter-spacing:-0.28px;-webkit-text-stroke:0.3px #1e1e1e;">Fr 20.09.2019</div>
<div class="t" style="left:-74.5px;width:200px;text-align:right;top:600.835px;line-height:20px;font-size:12.5px;color:#1e1e1e;letter-spacing:-0.28px;-webkit-text-stroke:0.3px #1e1e1e;">Sa 21.09.2019</div>
<div class="t" style="left:-74.5px;width:200px;text-align:right;top:621.705px;line-height:20px;font-size:12.5px;color:#1e1e1e;letter-spacing:-0.28px;-webkit-text-stroke:0.3px #1e1e1e;">So 22.09.2019</div>
<div class="t" style="left:-74.5px;width:200px;text-align:right;top:642.575px;line-height:20px;font-size:12.5px;color:#1e1e1e;letter-spacing:-0.28px;-webkit-text-stroke:0.3px #1e1e1e;">Mo 23.09.2019</div>
<div class="t" style="left:-74.5px;width:200px;text-align:right;top:663.445px;line-height:20px;font-size:12.5px;color:#1e1e1e;letter-spacing:-0.28px;-webkit-text-stroke:0.3px #1e1e1e;">Di 24.09.2019</div>
<div class="t" style="left:-74.5px;width:200px;text-align:right;top:684.315px;line-height:20px;font-size:12.5px;color:#1e1e1e;letter-spacing:-0.28px;-webkit-text-stroke:0.3px #1e1e1e;">Mi 25.09.2019</div>
<div class="t" style="left:-74.5px;width:200px;text-align:right;top:705.1850000000001px;line-height:20px;font-size:12.5px;color:#1e1e1e;letter-spacing:-0.28px;-webkit-text-stroke:0.3px #1e1e1e;">Do 26.09.2019</div>
<div class="t" style="left:-74.5px;width:200px;text-align:right;top:726.0550000000001px;line-height:20px;font-size:12.5px;color:#1e1e1e;letter-spacing:-0.28px;-webkit-text-stroke:0.3px #1e1e1e;">Fr 27.09.2019</div>
<div class="t" style="left:-74.5px;width:200px;text-align:right;top:746.9250000000001px;line-height:20px;font-size:12.5px;color:#1e1e1e;letter-spacing:-0.28px;-webkit-text-stroke:0.3px #1e1e1e;">Sa 28.09.2019</div>
<div class="t" style="left:-74.5px;width:200px;text-align:right;top:767.7950000000001px;line-height:20px;font-size:12.5px;color:#1e1e1e;letter-spacing:-0.28px;-webkit-text-stroke:0.3px #1e1e1e;">So 29.09.2019</div>
<div class="t" style="left:-74.5px;width:200px;text-align:right;top:788.6650000000001px;line-height:20px;font-size:12.5px;color:#1e1e1e;letter-spacing:-0.28px;-webkit-text-stroke:0.3px #1e1e1e;">Mo 30.09.2019</div>
<div class="t" style="left:26px;top:183.435px;line-height:20px;font-size:12.5px;color:#1e1e1e;letter-spacing:-0.28px;-webkit-text-stroke:0.3px #1e1e1e;">Datum</div>
<div class="t" style="left:130px;top:183.435px;line-height:20px;font-size:12.5px;color:#1e1e1e;letter-spacing:-0.28px;-webkit-text-stroke:0.3px #1e1e1e;">Arbeitsbeginn</div>
<div class="t" style="left:224px;top:183.435px;line-height:20px;font-size:12.5px;color:#1e1e1e;letter-spacing:-0.28px;-webkit-text-stroke:0.3px #1e1e1e;">Arbeitsende</div>
<div class="t" style="left:318px;top:183.435px;line-height:20px;font-size:12.5px;color:#1e1e1e;letter-spacing:-0.28px;-webkit-text-stroke:0.3px #1e1e1e;">Pause</div>
<div class="t" style="left:413px;top:183.435px;line-height:20px;font-size:12.5px;color:#1e1e1e;letter-spacing:-0.28px;-webkit-text-stroke:0.3px #1e1e1e;">Stunden</div>
<div style="left:24px;top:182px;width:700px;height:1px;background:#e8e8e8"></div>
<div style="left:24px;top:806px;width:700px;height:1px;background:#e8e8e8"></div>
<div style="left:24px;top:182px;width:1px;height:625px;background:#e8e8e8"></div>
<div style="left:723px;top:182px;width:1px;height:625px;background:#e8e8e8"></div>
<div style="left:22px;top:180px;width:704px;height:2px;background:#217346"></div>
<div style="left:22px;top:807px;width:704px;height:2px;background:#217346"></div>
<div style="left:22px;top:180px;width:2px;height:629px;background:#217346"></div>
<div style="left:724px;top:180px;width:2px;height:629px;background:#217346"></div>
<div style="left:722.5px;top:805.5px;width:5px;height:5px;background:#217346;outline:1px solid #fff"></div>
<div style="left:736px;top:99px;width:231px;height:285px;background:#fff;border:1px solid #c6c6c6;box-sizing:border-box;box-shadow:1px 1px 2px rgba(0,0,0,0.08)"></div>
<svg style="position:absolute;left:744px;top:107px" width="26" height="30" viewBox="0 0 26 30"><rect x=".5" y=".5" width="23" height="24" fill="#fff" stroke="#999"/><path d="M6.5 0v25" stroke="#ccc" stroke-width=".8"/><path d="M12.5 0v25" stroke="#ccc" stroke-width=".8"/><path d="M18.5 0v25" stroke="#ccc" stroke-width=".8"/><path d="M0 5.5h24" stroke="#ccc" stroke-width=".8"/><path d="M0 10.5h24" stroke="#ccc" stroke-width=".8"/><path d="M0 15.5h24" stroke="#ccc" stroke-width=".8"/><path d="M0 20.5h24" stroke="#ccc" stroke-width=".8"/><rect x="6" y="8" width="12" height="5" fill="#f0c060"/><rect x="12.5" y="17.5" width="13" height="12" fill="#fff" stroke="#666"/><text x="14" y="27" font-size="8.5" font-family="Liberation Sans" fill="#333">≤&gt;</text></svg>
<div class="t" style="left:775px;top:114.5px;line-height:20px;font-size:10.5px;color:#333;-webkit-text-stroke:0.4px #333;">Regeln zum <u>H</u>ervorheben von Zellen</div>
<svg style="position:absolute;left:954px;top:117.5px" width="4" height="6" viewBox="0 0 4 6"><path d="M0 0l3 3L0 6z" fill="#444"/></svg>
<svg style="position:absolute;left:744px;top:150px" width="26" height="29" viewBox="0 0 26 29"><rect x=".5" y=".5" width="23" height="24" fill="#fff" stroke="#999"/><path d="M6.5 0v25" stroke="#ccc" stroke-width=".8"/><path d="M12.5 0v25" stroke="#ccc" stroke-width=".8"/><path d="M18.5 0v25" stroke="#ccc" stroke-width=".8"/><path d="M0 5.5h24" stroke="#ccc" stroke-width=".8"/><path d="M0 10.5h24" stroke="#ccc" stroke-width=".8"/><path d="M0 15.5h24" stroke="#ccc" stroke-width=".8"/><path d="M0 20.5h24" stroke="#ccc" stroke-width=".8"/><rect x="6" y="1" width="9" height="16" fill="#f0c060"/><path d="M10.5 14V4M7.5 7l3-3 3 3" stroke="#444" stroke-width="1.4" fill="none"/><rect x="11.5" y="15.5" width="14" height="12.5" fill="#fff" stroke="#666"/><text x="13" y="25.5" font-size="9" font-family="Liberation Sans" fill="#333">10</text></svg>
<div class="t" style="left:775px;top:156.0px;line-height:20px;font-size:10.5px;color:#333;-webkit-text-stroke:0.4px #333;letter-spacing:0.2px;">Regeln für <u>o</u>berste/unterste Werte</div>
<svg style="position:absolute;left:954px;top:159.5px" width="4" height="6" viewBox="0 0 4 6"><path d="M0 0l3 3L0 6z" fill="#444"/></svg>
<div style="left:774px;top:183px;width:191px;height:1px;background:#e2e2e2"></div>
<svg style="position:absolute;left:744px;top:194px" width="25" height="26" viewBox="0 0 25 26"><rect x=".5" y=".5" width="23" height="24" fill="#fff" stroke="#999"/><path d="M8.5 0v25" stroke="#bbb" stroke-width=".8"/><path d="M16.5 0v25" stroke="#bbb" stroke-width=".8"/><path d="M0 5.5h24" stroke="#bbb" stroke-width=".8"/><path d="M0 10.5h24" stroke="#bbb" stroke-width=".8"/><path d="M0 15.5h24" stroke="#bbb" stroke-width=".8"/><path d="M0 20.5h24" stroke="#bbb" stroke-width=".8"/><rect x="6" y="2" width="10" height="4" fill="#2e6fbd"/><rect x="6" y="7" width="5" height="4" fill="#2e6fbd"/><rect x="6" y="12" width="8" height="4" fill="#2e6fbd"/><rect x="6" y="17" width="4" height="3" fill="#2e6fbd"/><rect x="6" y="21" width="7" height="3" fill="#2e6fbd"/></svg>
<div class="t" style="left:775px;top:200.0px;line-height:20px;font-size:10.5px;color:#333;-webkit-text-stroke:0.4px #333;"><u>D</u>atenbalken</div>
<svg style="position:absolute;left:954px;top:204.5px" width="4" height="6" viewBox="0 0 4 6"><path d="M0 0l3 3L0 6z" fill="#444"/></svg>
<svg style="position:absolute;left:744px;top:236px" width="25" height="25" viewBox="0 0 25 25"><rect x=".5" y=".5" width="23" height="23" fill="#fff" stroke="#999"/><path d="M8.5 0v24" stroke="#bbb" stroke-width=".8"/><path d="M16.5 0v24" stroke="#bbb" stroke-width=".8"/><path d="M0 5.5h24" stroke="#bbb" stroke-width=".8"/><path d="M0 10.5h24" stroke="#bbb" stroke-width=".8"/><path d="M0 14.5h24" stroke="#bbb" stroke-width=".8"/><path d="M0 19.5h24" stroke="#bbb" stroke-width=".8"/><rect x="5" y="1" width="14" height="4.5" fill="#3d6fb0"/><rect x="5" y="5.5" width="14" height="4.5" fill="#6f9e66"/><rect x="5" y="10" width="14" height="4.5" fill="#e8b050"/><rect x="5" y="14.5" width="14" height="4.5" fill="#eb9050"/><rect x="5" y="19" width="14" height="4.5" fill="#d85a3e"/></svg>
<div class="t" style="left:775px;top:241.0px;line-height:20px;font-size:10.5px;color:#333;-webkit-text-stroke:0.4px #333;"><u>F</u>arbskalen</div>
<svg style="position:absolute;left:954px;top:245.5px" width="4" height="6" viewBox="0 0 4 6"><path d="M0 0l3 3L0 6z" fill="#444"/></svg>
<svg style="position:absolute;left:744px;top:278px" width="25" height="22" viewBox="0 0 25 22"><rect x=".5" y=".5" width="23" height="20" fill="#fff" stroke="#999"/><path d="M0 5.5h24" stroke="#bbb" stroke-width=".8"/><path d="M0 10.5h24" stroke="#bbb" stroke-width=".8"/><path d="M0 16.5h24" stroke="#bbb" stroke-width=".8"/><circle cx="7" cy="3" r="1.3" fill="#4a9a5a"/><circle cx="7" cy="8" r="1.3" fill="#e8a030"/><circle cx="7" cy="13" r="1.3" fill="#4a9a5a"/><circle cx="7" cy="18" r="1.3" fill="#e06030"/><path d="M10 3h9M10 8h9M10 13h9M10 18h9" stroke="#bbb" stroke-width="1"/></svg>
<div class="t" style="left:775px;top:283.0px;line-height:20px;font-size:10.5px;color:#333;-webkit-text-stroke:0.4px #333;"><u>S</u>ymbolsätze</div>
<svg style="position:absolute;left:954px;top:287.5px" width="4" height="6" viewBox="0 0 4 6"><path d="M0 0l3 3L0 6z" fill="#444"/></svg>
<div style="left:738px;top:310px;width:227px;height:1px;background:#e2e2e2"></div>
<svg style="position:absolute;left:741px;top:317px" width="13" height="14" viewBox="0 0 13 14"><rect x=".5" y=".5" width="12" height="13" fill="#fff" stroke="#999"/><path d="M0 4.5h13M0 9.5h13" stroke="#ccc"/><rect x="4" y="5" width="5" height="4" fill="#f0c060"/></svg>
<div class="t" style="left:764px;top:315.0px;line-height:20px;font-size:9.5px;color:#666;-webkit-text-stroke:0.15px #666;"><u>N</u>eue Regel...</div>
<svg style="position:absolute;left:741px;top:340px" width="14" height="14" viewBox="0 0 14 14"><rect x=".5" y=".5" width="11" height="12" fill="#fff" stroke="#999"/><path d="M0 4.5h12M0 8.5h12" stroke="#ccc"/><rect x="3" y="5" width="5" height="3" fill="#f0c060"/><path d="M6 13l6-6 2 2-6 5z" fill="#e0609a"/></svg>
<div class="t" style="left:764px;top:337.6px;line-height:20px;font-size:9.7px;color:#555;-webkit-text-stroke:0.15px #555;">Regeln lös<u>c</u>hen</div>
<svg style="position:absolute;left:954px;top:343.5px" width="4" height="6" viewBox="0 0 4 6"><path d="M0 0l3 3L0 6z" fill="#444"/></svg>
<svg style="position:absolute;left:741px;top:362px" width="14" height="14" viewBox="0 0 14 14"><rect x="2.5" y=".5" width="11" height="12" fill="#eee" stroke="#aaa"/><rect x=".5" y="2.5" width="11" height="11" fill="#fff" stroke="#999"/><path d="M1 6.5h10M1 10.5h10" stroke="#ccc"/><rect x="4" y="7" width="4" height="3" fill="#f0c060"/></svg>
<div class="t" style="left:764px;top:359.2px;line-height:20px;font-size:9.7px;color:#555;-webkit-text-stroke:0.15px #555;"><u>R</u>egeln verwalten...</div>
<div style="left:707px;top:300px;width:261px;height:38px;border:3px solid #e0101c;box-sizing:border-box"></div>
<div style="left:0px;top:0px;width:1000px;height:837px;border:1px solid #a8a8a8;box-sizing:border-box;background:transparent"></div>
</body></html>
